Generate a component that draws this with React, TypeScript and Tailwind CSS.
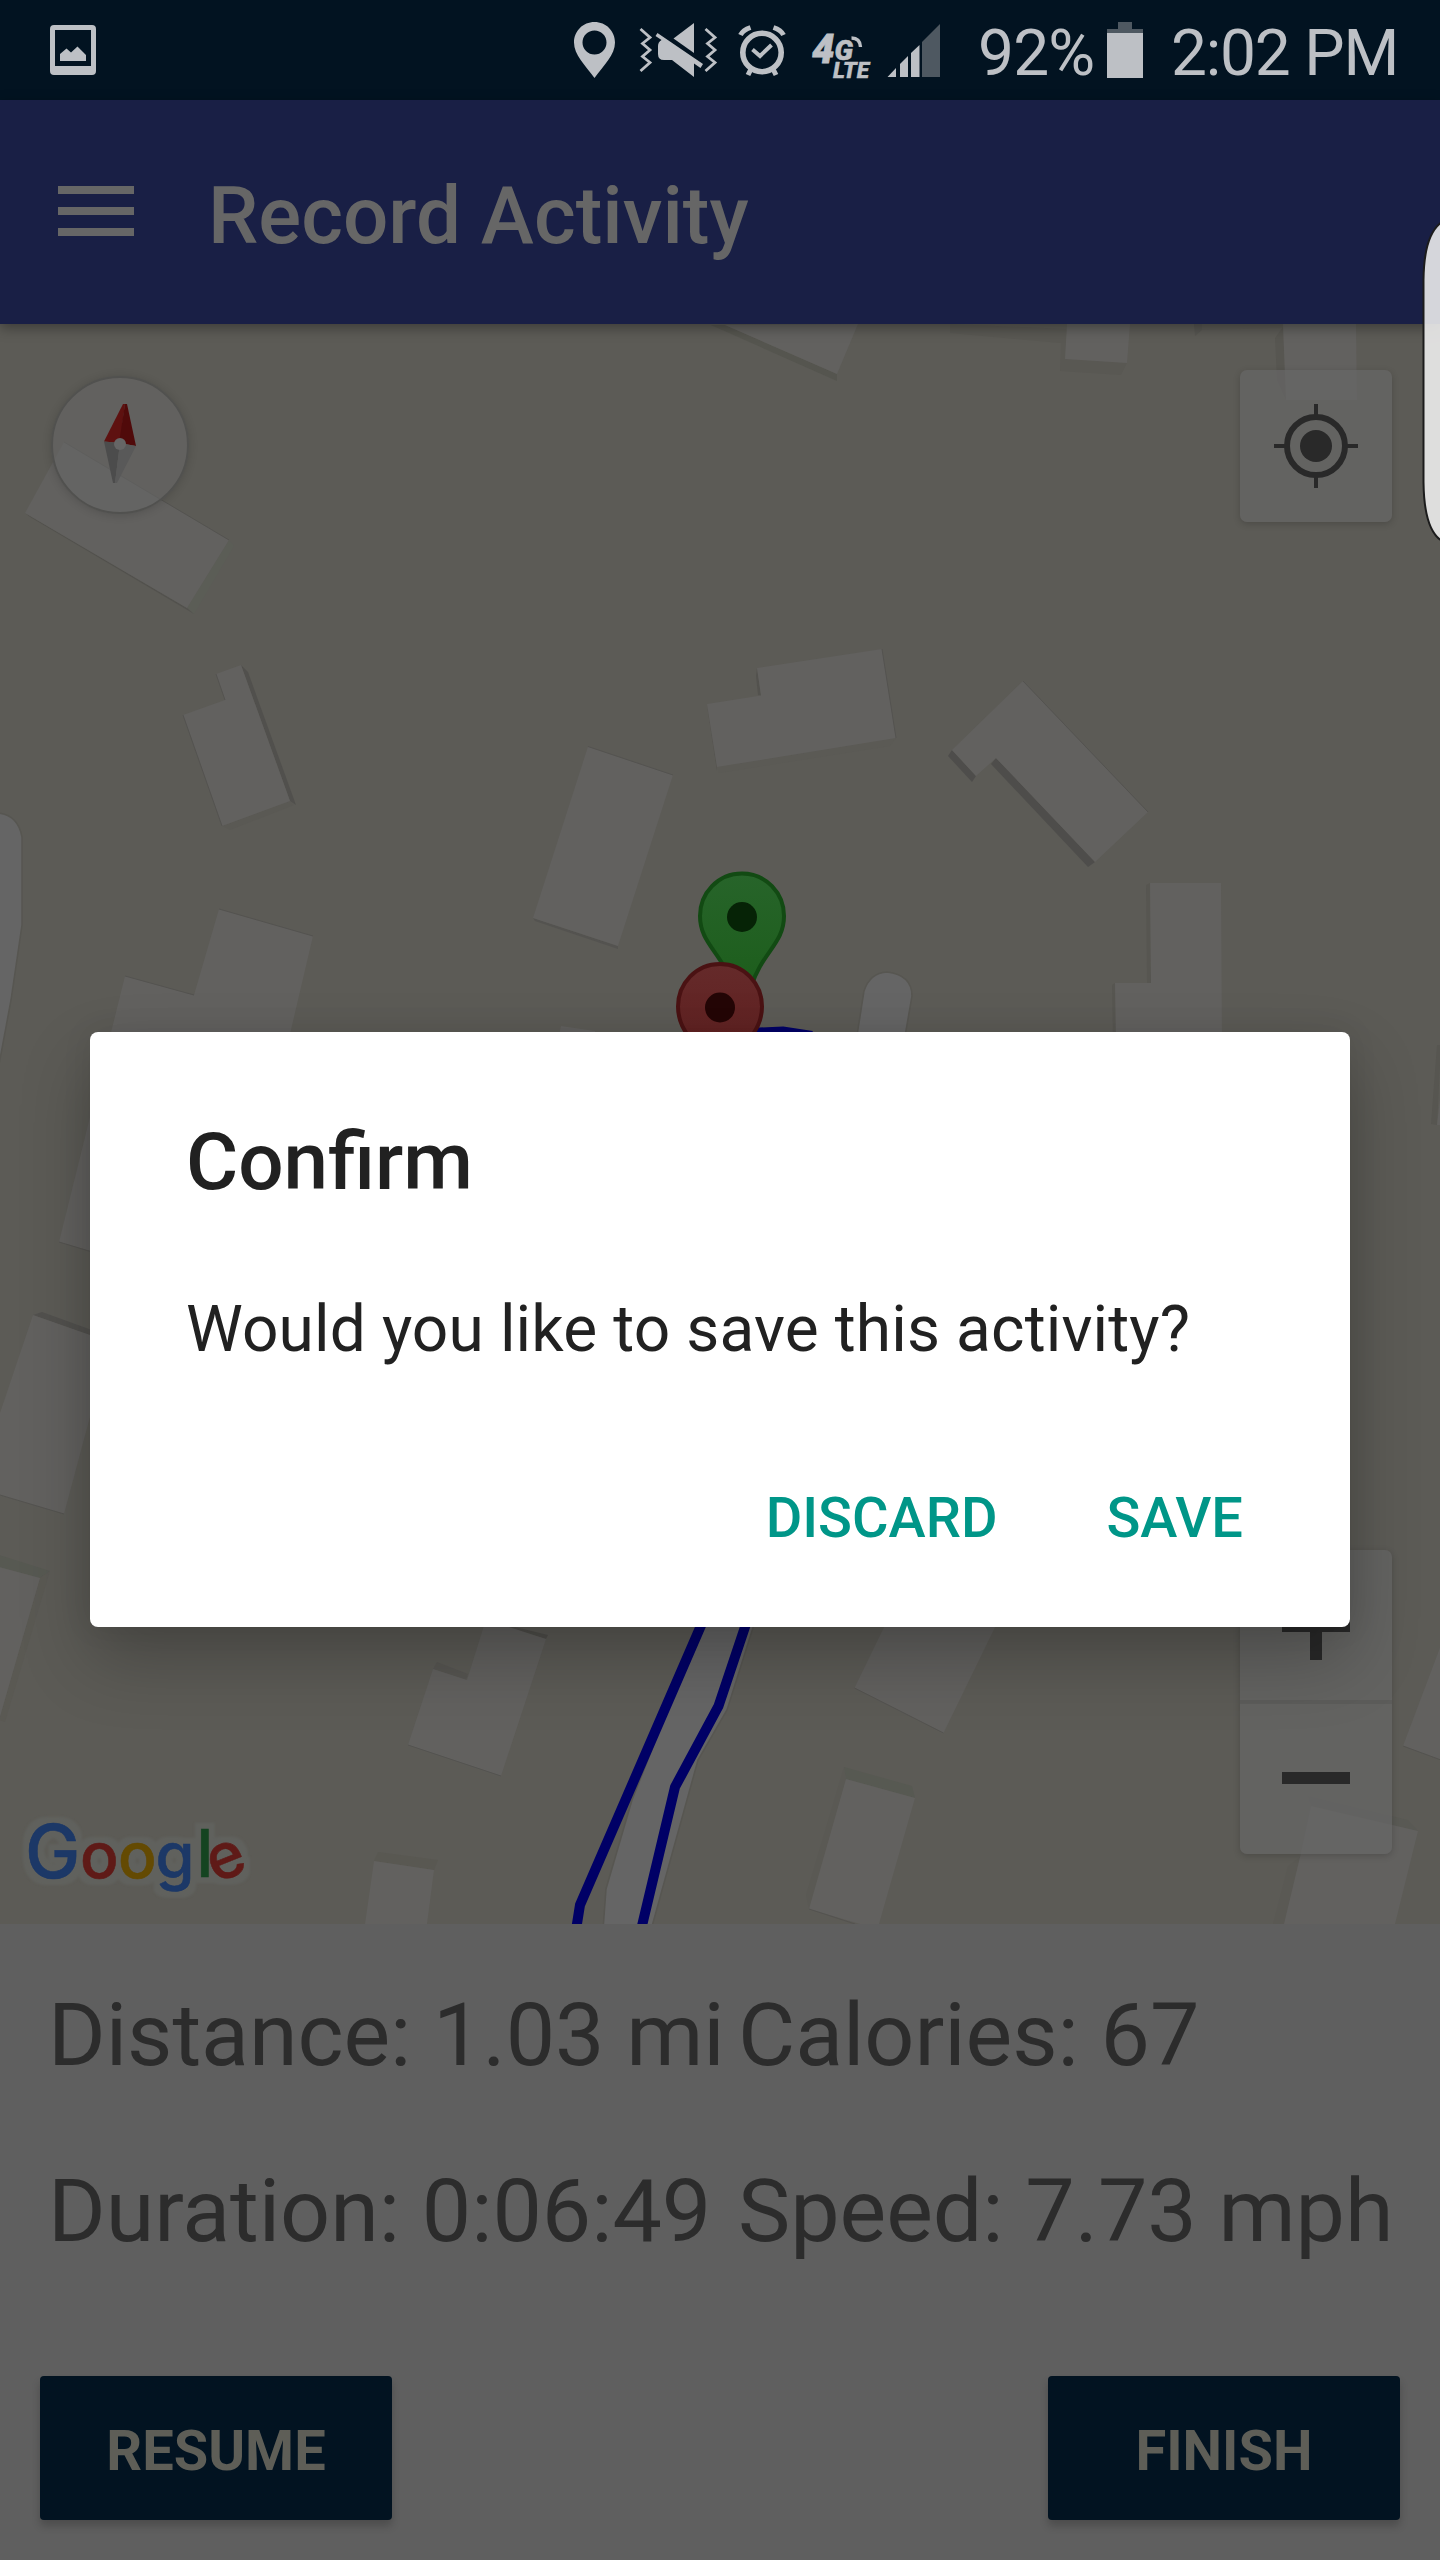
import React from "react";

const INK = "#bdc0c5";

function StatusBar() {
  return (
    <div className="flex h-[100px] w-full items-center bg-[#021321]">
      <svg className="ml-[50px] shrink-0" width="46" height="50" viewBox="50 25 46 50">
        <path
          fill={INK}
          fillRule="evenodd"
          d="M54 25H92a4 4 0 0 1 4 4V71a4 4 0 0 1-4 4H54a4 4 0 0 1-4-4V29a4 4 0 0 1 4-4ZM55 30V66H91V30Z"
        />
        <path fill={INK} d="M60 61V54L66.5 48.5L71 52.5L77.5 46.5L86 55V61Z" />
      </svg>
      <svg className="ml-[478px] shrink-0" width="42" height="60" viewBox="574 20 42 60">
        <path
          fill={INK}
          fillRule="evenodd"
          d="M594.5 22C606 22 615 31 615 42.500C615 55 604 65 594.500 78C585 65 574 55 574 42.500C574 31 583 22 594.500 22ZM594.500 30.500a12 12 0 1 0 0 24a12 12 0 1 0 0-24Z"
        />
      </svg>
      <svg className="ml-[22px] shrink-0" width="80" height="60" viewBox="638 20 80 60">
        <g fill="none" stroke={INK} strokeWidth="2.8">
          <path d="M640.500 29L650 37.500L642.500 43.500L650 50L642.500 56.500L650 62.500L640.500 71" />
          <path d="M705.500 29L715 37.500L707.500 43.500L715 50L707.500 56.500L715 62.500L705.500 71" />
        </g>
        <path fill={INK} d="M694 23V53L673.500 38.500Z" />
        <path
          fill={INK}
          d="M657.500 33L703 64L700.500 68L694 63.500V77L672 60H664Q658 60 658 54V46Q658 42 661.500 40L655.500 36Z"
        />
      </svg>
      <svg className="ml-[18px] shrink-0" width="52" height="60" viewBox="736 20 52 60">
        <g fill="none" stroke={INK}>
          <circle cx="762" cy="52.500" r="19.200" strokeWidth="5.600" />
          <path strokeWidth="4" d="M752.500 49.500L760 56L771.500 45" />
          <path strokeWidth="5" d="M740.500 35Q743 30 750.500 27.500M783.500 35Q781 30 773.500 27.500" />
          <path strokeWidth="5" d="M751 69L748 75M773 69L776 75" />
        </g>
      </svg>
      <svg className="ml-[22px] shrink-0 overflow-visible" width="62" height="60" viewBox="810 20 62 60">
        <g fill={INK} fontFamily="Roboto" fontWeight="900" fontStyle="italic" stroke={INK}>
          <text x="812" y="62.500" fontSize="40" strokeWidth="0.800">4</text>
          <text x="834.500" y="60" fontSize="28" strokeWidth="0.600">G</text>
          <text x="833" y="77.500" fontSize="22" strokeWidth="0.300" textLength="36" lengthAdjust="spacingAndGlyphs">LTE</text>
        </g>
        <path d="M851.500 38Q860 38 860.500 47" fill="none" stroke={INK} strokeWidth="3.400" />
      </svg>
      <svg className="ml-[15px] shrink-0" width="55" height="60" viewBox="887 20 55 60">
        <path fill={INK} d="M887.500 77L896 68V77ZM900 77V64L908 56V77ZM911 77V53L919.500 45V77Z" />
        <path fill="#4e5861" d="M922 77V42L940 24V77Z" />
      </svg>
      <div className="ml-[36px] w-[129px] shrink-0 pt-[7px] text-[64px] leading-[76px] tracking-[-0.8px] whitespace-nowrap text-[#bdc0c5]">
        92%
      </div>
      <svg className="shrink-0" width="36" height="58" viewBox="1107 20 36 58">
        <path fill="#4e5861" d="M1118 21H1132V28H1143V32H1107V28H1118Z" />
        <path fill={INK} d="M1107 32H1143V77H1107Z" />
      </svg>
      <div className="ml-[28px] shrink-0 pt-[7px] text-[64px] leading-[76px] tracking-[-1.2px] whitespace-nowrap text-[#bdc0c5]">
        2:02 PM
      </div>
    </div>
  );
}

function AppBar() {
  return (
    <div className="relative z-10 flex h-[224px] w-full items-center bg-[#191f45] shadow-[0_4px_12px_rgba(0,0,0,0.35)]">
      <div className="mb-[2px] ml-[58px] flex w-[76px] flex-col gap-[13px]">
        <div className="h-[8px] bg-[#666666]" />
        <div className="h-[8px] bg-[#666666]" />
        <div className="h-[8px] bg-[#666666]" />
      </div>
      <div className="ml-[74px] pt-[7px] text-[80px] leading-[96px] font-medium whitespace-nowrap text-[#666666]">
        Record Activity
      </div>
    </div>
  );
}

const roofs = [
  "25,513 64,442 229,540 187,608",
  "216,674 241,665 290,801 222,826 183,715 225,700",
  "219,909 313,936 230,1290 59,1242 125,976 194,995",
  "33,1315 110,1342 64,1514 -1,1495 -1,1416",
  "-1,1567 40,1578 -1,1720",
  "492,1600 509,1627 546,1639 501,1776 408,1745 433,1669 467,1680",
  "374,1861 434,1870 427,1924 365,1924",
  "725,325 837,374 858,324",
  "1067,324 1130,324 1127,363 1065,359",
  "1283,324 1356,324 1357,400 1286,400",
  "757,668 882,649 896,738 717,767 707,704 761,695.5",
  "588,746.5 673,775 618,946 533,918",
  "1023,681 1148,812 1095,862 996,758 976,776 952,750",
  "1150,883 1221,883 1222,1040 1116,1040 1115,983 1151,983",
  "561,1026 595,1031 595,1040 558,1040",
  "1441,1090 1437,1125 1441,1125",
  "889,1617 1000,1617 943.5,1733 854.5,1688",
  "846,1779 915,1798 879,1924 860,1924 809,1909",
  "1311,1806 1418,1831 1395,1924 1284,1924 1300,1857",
  "1441,1645 1403,1746 1441,1760",
];

const walls: [string, string][] = [
  ["229,540 234,546 194,614 187,608", "#5b5d56"],
  ["25,513 187,608 194,614 30,517", "#53524e"],
  ["241,665 248,672 296,805 290,801", "#51504d"],
  ["222,826 290,801 294,805 230,830", "#5a5954"],
  ["33,1315 42,1312 100,1333 100,1339", "#52514e"],
  ["-1,1555 50,1571 40,1578 -1,1567", "#575952"],
  ["50,1571 40,1578 -1,1720 5,1722", "#5a5953"],
  ["437,1662 468,1674 466,1680 433,1669", "#575652"],
  ["503,1624 548,1635 546,1639 509,1628", "#504f4b"],
  ["378,1852 438,1860 434,1870 374,1861", "#595852"],
  ["711,325 837,381 837,374 725,325", "#55554f"],
  ["950,324 1067,329 1065,359 1127,363 1121,375 1060,371 1061,343 950,333", "#595853"],
  ["1194,324 1202,324 1202,330 1195,336", "#565551"],
  ["1202,324 1283,324 1283,328 1202,330", "#5a5954"],
  ["1283,327 1275,338 1277,380 1286,400", "#575651"],
  ["757,668 761,695.5 758,695 756,676", "#53524e"],
  ["707,704 717,767 717,771 708,712", "#54534f"],
  ["717,767 896,738 890,746 719,773", "#5b5a55"],
  ["533,918 618,946 618,949 535,921", "#545350"],
  ["952,750 976,776 972,782 948,756", "#4e4d4b"],
  ["996,758 1095,862 1088,867 991,764", "#4e4d4b"],
  ["1150,883 1151,983 1147,983 1146,885", "#575651"],
  ["1115,983 1116,1040 1113,1040 1112,985", "#575651"],
  ["1437,1045 1441,1045 1437,1125 1431,1124", "#575651"],
  ["910,1617 923,1632 922,1627 922,1617", "#4a4946"],
  ["844,1767 912,1786 915,1798 846,1779", "#575952"],
  ["844,1767 846,1779 809,1909 806,1895", "#5a5954"],
  ["1308,1796 1408,1820 1418,1831 1311,1806", "#595954"],
  ["1300,1857 1284,1924 1273,1924 1288,1866", "#5a5954"],
];

const hairlines =
  "M64 442L229 540M216 674L225 700M183 715L222 826M219 909L313 936M125 976L194 995M59 1242L92 1252M0 1495L64 1514M408 1745L501 1776M588 746.500L673 775M882 649L896 738M1023 681L1148 812M854.500 1688L943.500 1733M809 1909L855 1924M1403 1746L1441 1760";

function Pin({ x, y, top, bottom, edge, dot, id }: { x: number; y: number; top: string; bottom: string; edge: string; dot: string; id: string }) {
  return (
    <g transform={`translate(${x} ${y})`}>
      <defs>
        <linearGradient id={id} x1="0" y1="0" x2="0" y2="1">
          <stop offset="0" stopColor={top} />
          <stop offset="1" stopColor={bottom} />
        </linearGradient>
      </defs>
      <path
        d="M0-43.500C24-43.500 42-24 42-1C42 27 20 35 9 70Q4 88 0 98Q-4 88-9 70C-20 35-42 27-42-1C-42-24-24-43.500 0-43.500Z"
        fill={`url(#${id})`}
        stroke={edge}
        strokeWidth="4"
      />
      <circle r="15" fill={dot} />
    </g>
  );
}

function GoogleLogo() {
  const letters = [
    { c: "G", x: 25, y: 1877.5, s: 74, f: "#1c3867" },
    { c: "o", x: 80, y: 1877.5, s: 64, f: "#5f1a17" },
    { c: "o", x: 118, y: 1877.5, s: 64, f: "#644a02" },
    { c: "g", x: 155.5, y: 1877.5, s: 63, f: "#1c3867" },
    { c: "l", x: 196.5, y: 1876.5, s: 66, f: "#154421" },
    { c: "e", x: 207.5, y: 1877.5, s: 63, f: "#5f1a17" },
  ];
  return (
    <g fontFamily="Inter" fontWeight="500" filter="url(#halo)">
      <defs>
        <filter id="halo" filterUnits="userSpaceOnUse" x="0" y="1800" width="280" height="120" colorInterpolationFilters="sRGB">
          <feMorphology in="SourceAlpha" operator="dilate" radius="6" result="wide" />
          <feGaussianBlur in="wide" stdDeviation="1.2" result="soft" />
          <feFlood floodColor="#60615d" />
          <feComposite in2="soft" operator="in" result="ring" />
          <feMerge>
            <feMergeNode in="ring" />
            <feMergeNode in="SourceGraphic" />
          </feMerge>
        </filter>
      </defs>
      {letters.map((l, i) => (
        <text
          key={i}
          x={l.x}
          y={l.y}
          fontSize={l.s}
          fill={l.f}
          stroke={l.f}
          strokeWidth="0.6"
          transform={l.c === "e" ? "rotate(-22 227 1860)" : undefined}
        >
          {l.c}
        </text>
      ))}
    </g>
  );
}

function MapView() {
  return (
    <div className="relative h-[1600px] w-full overflow-hidden bg-[#5c5b56]">
      <svg className="block" width="1440" height="1600" viewBox="0 324 1440 1600">
        <g fill="#656565" stroke="#575651" strokeWidth="1.500">
          <path d="M-2 813Q18 815 22 837V925L11 1000L-2 1070Z" />
          <path d="M856 1042L864 991Q870 973 887 972Q912 975 912 996L904 1042Z" />
          <path d="M603 1930L606 1889L632 1800L705 1615H757L727 1710L698 1760L651 1930Z" />
        </g>
        {walls.map(([p, f]) => (
          <polygon key={p} points={p} fill={f} />
        ))}
        {roofs.map((p) => (
          <polygon key={p} points={p} fill="#62615f" />
        ))}
        <path d={hairlines} fill="none" stroke="#545350" strokeWidth="1" />
        <g fill="none" stroke="#000066" strokeWidth="10">
          <path d="M576 1930L580 1905L706 1614" />
          <path d="M641 1930L675 1787L718.500 1706L750 1612" />
          <path d="M750 1033L783 1031.500L812 1036" />
        </g>
        <Pin id="start" x={742} y={917} top="#27642a" bottom="#1a5c18" edge="#124a13" dot="#062306" />
        <Pin id="end" x={720} y={1007.5} top="#652a2a" bottom="#5c1a1a" edge="#4a1213" dot="#240606" />
        <GoogleLogo />
      </svg>

      {/* Compass */}
      <div className="absolute top-[52px] left-[51px] h-[138px] w-[138px] rounded-full border-2 border-[#51514f] bg-[#666666]/60 shadow-[0_1px_10px_rgba(0,0,0,0.16)]">
        <svg width="134" height="134" viewBox="53 378 134 134">
          <path fill="#5e1110" d="M123 404H125L120 443L104 441.500Z" />
          <path fill="#500a0a" d="M125 404H127L136 446L119 443Z" />
          <path fill="#4c4c4c" d="M104 441.500L120 443L115 483H113Z" />
          <path fill="#595959" d="M136 446L120 443L115 483H117Z" />
          <circle cx="120" cy="444" r="6" fill="#666666" />
        </svg>
      </div>

      {/* My location */}
      <div className="absolute top-[46px] left-[1240px] h-[152px] w-[152px] rounded-[7px] bg-[#666666]/70 shadow-[0_2px_7px_rgba(0,0,0,0.18)]">
        <svg width="152" height="152" viewBox="1240 370 152 152">
          <g fill="none" stroke="#292929">
            <circle cx="1316" cy="446" r="29" strokeWidth="6" />
            <path strokeWidth="4" d="M1316 404V415M1316 477V488M1274 446H1285M1347 446H1358" />
          </g>
          <circle cx="1316" cy="446" r="16" fill="#292929" />
        </svg>
      </div>

      {/* Zoom controls */}
      <div className="absolute top-[1226px] left-[1240px] flex w-[152px] flex-col rounded-[7px] bg-[#666666]/70 shadow-[0_2px_7px_rgba(0,0,0,0.18)]">
        <svg width="152" height="150" viewBox="1240 1550 152 150">
          <path fill="#292929" d="M1310 1592H1322V1620H1350V1632H1322V1660H1310V1632H1282V1620H1310Z" />
        </svg>
        <div className="h-[4px] bg-[#5c5c5a]" />
        <svg width="152" height="150" viewBox="1240 1704 152 150">
          <path fill="#292929" d="M1282 1772H1350V1784H1282Z" />
        </svg>
      </div>
    </div>
  );
}

function Stats() {
  return (
    <div className="h-[636px] w-full bg-[#5f5f5f] pt-[23px] text-[#2c2c2c]">
      <div className="grid grid-cols-[690px_1fr] pl-[48px] text-[88px] leading-[176px] tracking-[-0.06px] whitespace-nowrap">
        <div>Distance: 1.03 mi</div>
        <div>Calories: 67</div>
        <div>Duration: 0:06:49</div>
        <div>Speed: 7.73 mph</div>
      </div>
      <div className="mt-[77px] flex justify-between px-[40px] text-[56px] font-bold text-[#5e5e57]">
        <button className="h-[144px] w-[352px] rounded-[4px] bg-[#021321] pt-[6px] shadow-[0_6px_8px_rgba(0,0,0,0.2)]">
          RESUME
        </button>
        <button className="h-[144px] w-[352px] rounded-[4px] bg-[#021321] pt-[6px] shadow-[0_6px_8px_rgba(0,0,0,0.2)]">
          FINISH
        </button>
      </div>
    </div>
  );
}

function ConfirmDialog() {
  return (
    <div className="absolute top-[1032px] left-[90px] z-20 h-[595px] w-[1260px] rounded-[8px] bg-white px-[96px] pt-[82px] text-[#212121] shadow-[0_32px_70px_rgba(0,0,0,0.24),0_0_30px_rgba(0,0,0,0.08)]">
      <h2 className="text-[80px] leading-[96px] font-medium">Confirm</h2>
      <p className="mt-[80px] text-[64px] leading-[80px] tracking-[0.13px] whitespace-nowrap">
        Would you like to save this activity?
      </p>
      <div className="mt-[108px] flex justify-end gap-[109px] pr-[11px] text-[56px] leading-[80px] font-medium text-[#009688]">
        <button>DISCARD</button>
        <button>SAVE</button>
      </div>
    </div>
  );
}

export default function App() {
  return (
    <div className="relative flex h-[2560px] w-[1440px] flex-col overflow-hidden bg-[#5f5f5f] font-['Roboto',sans-serif]">
      <StatusBar />
      <AppBar />
      <MapView />
      <Stats />
      <ConfirmDialog />
      {/* Edge panel handle */}
      <svg className="absolute top-[215px] right-0 z-30" width="20" height="335" viewBox="1420 215 20 335">
        <path
          d="M1442 222Q1424 234 1423.500 280V482Q1424 530 1442 541Z"
          fill="#f1f1f1"
          fillOpacity="0.87"
          stroke="#1c1c1c"
          strokeWidth="2"
        />
      </svg>
    </div>
  );
}
